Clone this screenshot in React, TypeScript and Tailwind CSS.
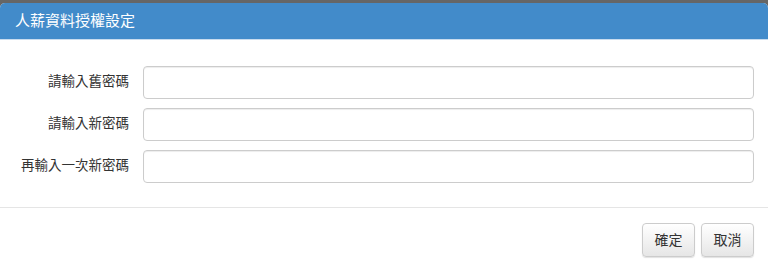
import React from 'react';

const font = "font-['Liberation_Sans','Noto_Sans_CJK_TC',sans-serif]";

function Field({ label }: { label: string }) {
  return (
    <div className="flex h-[33px] items-center">
      <label className="w-[129px] shrink-0 text-right text-[13.5px] text-[#333]">{label}</label>
      <input
        type="password"
        className="ml-[14px] h-[33px] flex-1 rounded-[4px] border border-[#ccc] bg-white px-3 shadow-[inset_0_1px_1px_rgba(0,0,0,0.075)] outline-none"
      />
    </div>
  );
}

function Btn({ children }: { children: React.ReactNode }) {
  return (
    <button className="h-[34px] w-[53px] rounded-[4px] border border-[#ccc] bg-gradient-to-b from-white to-[#e6e6e6] text-[14px] text-[#333] shadow-[0_1px_1px_rgba(0,0,0,0.12)]">
      {children}
    </button>
  );
}

export default function App() {
  return (
    <div className={`h-[270px] w-[768px] bg-[#666] pt-[3px] ${font}`}>
      <div className="flex h-[267px] flex-col overflow-hidden rounded-t-[5px] bg-white">
        {/* Header */}
        <div className="flex h-[37px] items-center border-b border-[#c9dcee] bg-[#428bca] px-[15px]">
          <h4 className="text-[15px] text-white">人薪資料授權設定</h4>
        </div>

        {/* Body */}
        <div className="flex h-[167px] flex-col gap-[9px] pr-[14px] pt-[26px]">
          <Field label="請輸入舊密碼" />
          <Field label="請輸入新密碼" />
          <Field label="再輸入一次新密碼" />
        </div>

        {/* Footer */}
        <div className="flex flex-1 justify-end gap-[6px] border-t border-[#e5e5e5] pr-[14px] pt-[15px]">
          <Btn>確定</Btn>
          <Btn>取消</Btn>
        </div>
      </div>
    </div>
  );
}
